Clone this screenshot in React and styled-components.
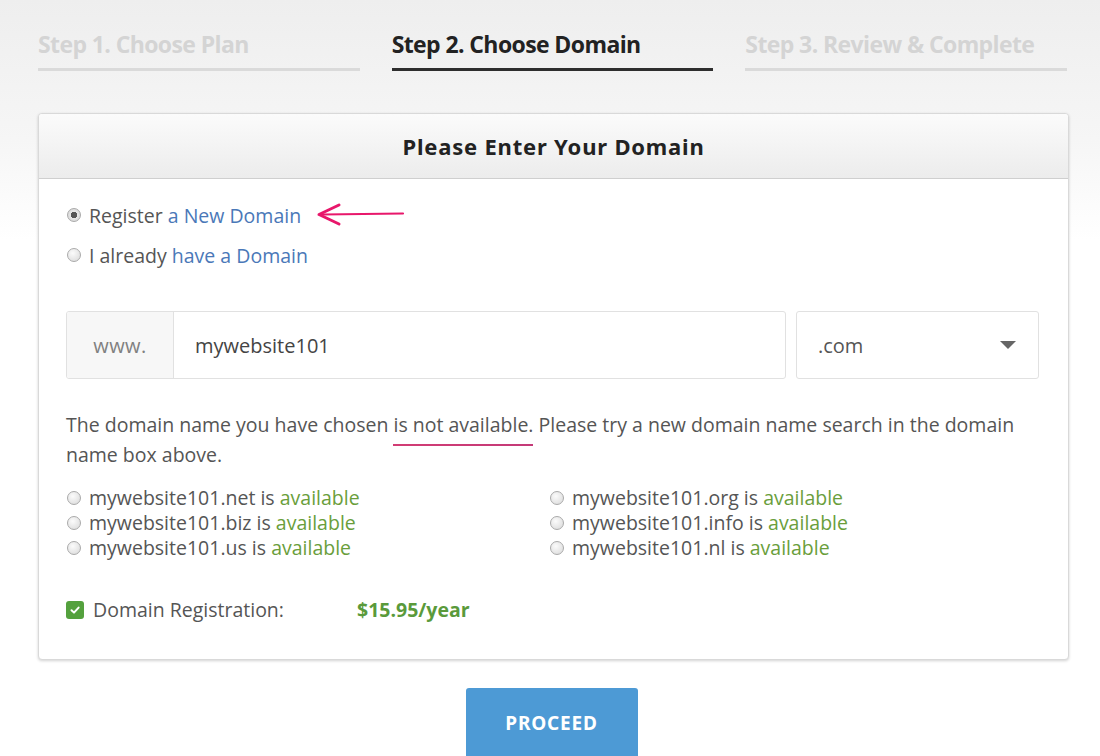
import React from 'react';
import styled, { createGlobalStyle } from 'styled-components';

const GlobalStyle = createGlobalStyle`
  html, body {
    margin: 0;
    padding: 0;
  }
  body {
    font-family: "Open Sans", "Liberation Sans", sans-serif;
    background: linear-gradient(to bottom, #eeeeee 0px, #f6f6f6 140px, #ffffff 240px, #ffffff 100%);
    min-height: 756px;
    overflow: hidden;
  }
`;

const steps = [
  { label: 'Step 1. Choose Plan', active: false },
  { label: 'Step 2. Choose Domain', active: true },
  { label: 'Step 3. Review & Complete', active: false },
];

const suggestions = [
  ['mywebsite101.net', 'mywebsite101.org'],
  ['mywebsite101.biz', 'mywebsite101.info'],
  ['mywebsite101.us', 'mywebsite101.nl'],
];

function App() {
  return (
    <Page>
      <GlobalStyle />
      <Steps>
        {steps.map((s) => (
          <Step key={s.label} $active={s.active}>{s.label}</Step>
        ))}
      </Steps>

      <Card>
        <CardHeader>Please Enter Your Domain</CardHeader>
        <CardBody>
          <Choices>
            <Choice>
              <Radio $checked />
              Register&nbsp;<Blue>a New Domain</Blue>
              <Arrow width="90" height="24" viewBox="0 0 90 24">
                <path d="M88 11.5 L8 12.5" stroke="#e8176b" strokeWidth="2.2" fill="none" strokeLinecap="round" />
                <path d="M24 3 L4 12.5 L24 22" stroke="#e8176b" strokeWidth="3" fill="none" strokeLinecap="round" strokeLinejoin="round" />
              </Arrow>
            </Choice>
            <Choice>
              <Radio />
              I already&nbsp;<Blue>have a Domain</Blue>
            </Choice>
          </Choices>

          <DomainRow>
            <InputGroup>
              <Addon>www.</Addon>
              <DomainInput>mywebsite101</DomainInput>
            </InputGroup>
            <Select>
              .com
              <Caret />
            </Select>
          </DomainRow>

          <Message>
            The domain name you have chosen <Marked>is not available.</Marked> Please try a new domain name search in the domain name box above.
          </Message>

          <Options>
            {suggestions.map((row) =>
              row.map((d) => (
                <Option key={d}>
                  <Radio />
                  {d} is&nbsp;<Green>available</Green>
                </Option>
              ))
            )}
          </Options>

          <Registration>
            <Check>
              <svg width="12" height="12" viewBox="0 0 12 12">
                <path d="M2.5 6.2 L5 8.6 L9.6 3.6" stroke="#fff" strokeWidth="2" fill="none" strokeLinecap="round" strokeLinejoin="round" />
              </svg>
            </Check>
            <RegLabel>Domain Registration:</RegLabel>
            <Price>$15.95/year</Price>
          </Registration>
        </CardBody>
      </Card>

      <Footer>
        <Proceed>PROCEED</Proceed>
      </Footer>
    </Page>
  );
}

export default App;

const Page = styled.div`
  width: 1100px;
  height: 756px;
  padding: 0 33px 0 38px;
  box-sizing: border-box;
  overflow: hidden;
`;

const Steps = styled.div`
  display: grid;
  grid-template-columns: repeat(3, 1fr);
  column-gap: 32px;
  padding-top: 29px;
`;

const Step = styled.div`
  font-family: "Open Sans", sans-serif;
  font-weight: 700;
  font-size: 23px;
  letter-spacing: -0.6px;
  line-height: 31px;
  color: ${(p) => (p.$active ? '#222' : '#d4d4d4')};
  padding-bottom: 8px;
  border-bottom: 3px solid ${(p) => (p.$active ? '#2e2e2e' : '#dadada')};
`;

const Card = styled.div`
  margin-top: 42px;
  width: 1029px;
  background: #fff;
  border: 1px solid #d9d9d9;
  border-radius: 4px;
  box-shadow: 0 1px 3px rgba(0, 0, 0, 0.18);
  overflow: hidden;
`;

const CardHeader = styled.div`
  height: 64px;
  display: flex;
  align-items: center;
  justify-content: center;
  background: linear-gradient(to bottom, #fbfbfb, #ececec);
  border-bottom: 1px solid #cfcfcf;
  font-family: "Noto Sans", "Open Sans", sans-serif;
  font-weight: 700;
  font-size: 22px;
  letter-spacing: 0.8px;
  color: #222;
`;

const CardBody = styled.div`
  padding: 22px 28px 36px 27px;
  font-size: 19.5px;
  color: #555;
`;

const Choices = styled.div`
  display: flex;
  flex-direction: column;
  gap: 12px;
`;

const Choice = styled.div`
  display: flex;
  align-items: center;
  height: 28px;
  font-size: 19.5px;
  color: #555;
`;

const Radio = styled.span`
  display: inline-block;
  flex: none;
  width: 14px;
  height: 14px;
  margin: 0 8px 0 1px;
  border-radius: 50%;
  border: 1px solid #aaa;
  box-sizing: border-box;
  background: ${(p) =>
    p.$checked
      ? 'radial-gradient(circle, #555 0 3px, #e6e6e6 3.5px, #d0d0d0 100%)'
      : 'radial-gradient(circle at 40% 35%, #fbfbfb, #d8d8d8)'};
`;

const Blue = styled.span`
  color: #4a78b8;
`;

const Green = styled.span`
  color: #6a9e3b;
`;

const Arrow = styled.svg`
  margin-left: 14px;
  margin-top: -2px;
`;

const DomainRow = styled.div`
  display: flex;
  gap: 10px;
  margin-top: 42px;
  margin-right: 1px;
`;

const InputGroup = styled.div`
  flex: 1;
  display: flex;
  height: 68px;
  border: 1px solid #e1e1e1;
  border-radius: 3px;
  box-sizing: border-box;
  overflow: hidden;
`;

const Addon = styled.div`
  width: 106px;
  display: flex;
  align-items: center;
  justify-content: center;
  background: #f7f7f7;
  border-right: 1px solid #e1e1e1;
  color: #808080;
  font-size: 20px;
  letter-spacing: 0.4px;
`;

const DomainInput = styled.div`
  flex: 1;
  display: flex;
  align-items: center;
  padding-left: 21px;
  font-size: 20px;
  color: #444;
`;

const Select = styled.div`
  width: 243px;
  height: 68px;
  box-sizing: border-box;
  display: flex;
  align-items: center;
  justify-content: space-between;
  padding: 0 22px 0 21px;
  border: 1px solid #e1e1e1;
  border-radius: 3px;
  font-size: 20px;
  color: #555;
`;

const Caret = styled.span`
  width: 0;
  height: 0;
  border-left: 8px solid transparent;
  border-right: 8px solid transparent;
  border-top: 8px solid #666;
`;

const Message = styled.p`
  margin: 31px 0 0;
  font-size: 19.5px;
  line-height: 30px;
  color: #555;
`;

const Marked = styled.span`
  padding-bottom: 8px;
  background: linear-gradient(to right, #d23c74, #c43a78) no-repeat left bottom / 100% 2px;
`;

const Options = styled.div`
  display: grid;
  grid-template-columns: 483px 1fr;
  margin-top: 15px;
`;

const Option = styled.div`
  display: flex;
  align-items: center;
  height: 25px;
  font-size: 19.5px;
  color: #555;
`;

const Registration = styled.div`
  display: flex;
  align-items: center;
  margin-top: 36px;
`;

const Check = styled.span`
  width: 18px;
  height: 18px;
  border-radius: 3px;
  background: #54a13d;
  display: flex;
  align-items: center;
  justify-content: center;
  margin-right: 9px;
`;

const RegLabel = styled.span`
  width: 264px;
  font-size: 19.5px;
  color: #555;
`;

const Price = styled.span`
  font-size: 19.5px;
  font-weight: 700;
  color: #5a9a3b;
`;

const Footer = styled.div`
  display: flex;
  justify-content: center;
  margin-top: 28px;
  padding-right: 2px;
`;

const Proceed = styled.button`
  width: 172px;
  height: 72px;
  border: none;
  border-radius: 3px;
  background: #4d9ad5;
  color: #fff;
  font-family: "Noto Sans", "Open Sans", sans-serif;
  font-weight: 700;
  font-size: 19px;
  letter-spacing: 0.8px;
  padding-bottom: 4px;
`;
